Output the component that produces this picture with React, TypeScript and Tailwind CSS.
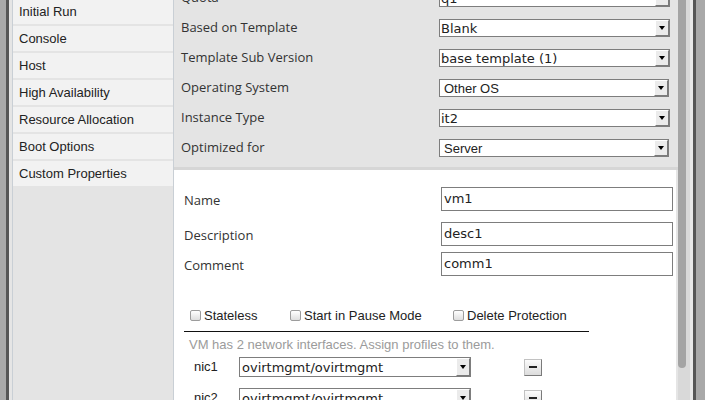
import React from 'react'

const SIDE_ITEMS = [
  'Initial Run',
  'Console',
  'Host',
  'High Availability',
  'Resource Allocation',
  'Boot Options',
  'Custom Properties',
]

const TOP_ROWS = [
  { label: 'Quota', value: 'q1', dejavu: true },
  { label: 'Based on Template', value: 'Blank', dejavu: true },
  { label: 'Template Sub Version', value: 'base template (1)', dejavu: true },
  { label: 'Operating System', value: 'Other OS', dejavu: false },
  { label: 'Instance Type', value: 'it2', dejavu: true },
  { label: 'Optimized for', value: 'Server', dejavu: false },
]

const TEXT_ROWS = [
  { label: 'Name', value: 'vm1', gap: 'mt-0' },
  { label: 'Description', value: 'desc1', gap: 'mt-[11px]' },
  { label: 'Comment', value: 'comm1', gap: 'mt-[6px]' },
]

const CHECKS = [
  { label: 'Stateless', width: 'w-[100px]' },
  { label: 'Start in Pause Mode', width: 'w-[163px]' },
  { label: 'Delete Protection', width: 'w-auto' },
]

function ArrowButton() {
  return (
    <span className="flex h-full w-[14px] shrink-0 items-center justify-center border-t border-l border-white border-r border-b border-r-[#7a7a7a] border-b-[#7a7a7a] bg-[#ebebeb]">
      <span className="h-0 w-0 border-x-[3px] border-t-[4px] border-x-transparent border-t-black" />
    </span>
  )
}

function Dropdown({ value, dejavu, width }: { value: string; dejavu: boolean; width: string }) {
  return (
    <div className={`flex h-[18px] items-stretch border border-[#7d7d7d] bg-white ${width}`}>
      <span
        className={`flex flex-1 items-center overflow-hidden whitespace-nowrap text-[13px] leading-none text-[#222] ${
          dejavu ? "pl-[1px] font-['DejaVu_Sans',sans-serif]" : "pl-[4px] font-['Liberation_Sans',sans-serif]"
        }`}
      >
        {value}
      </span>
      <ArrowButton />
    </div>
  )
}

function Checkbox({ label, width }: { label: string; width: string }) {
  return (
    <div className={`flex items-center gap-[3px] ${width}`}>
      <span className="h-[11px] w-[11px] rounded-[2px] border border-[#9c9c9c] bg-linear-to-b from-white to-[#dedede]" />
      <span className="pt-[1px] text-[13px] text-[#222]">{label}</span>
    </div>
  )
}

function MinusButton() {
  return (
    <span className="flex h-[17px] w-[18px] items-center justify-center border border-[#c2c2c2] border-r-[#7a7a7a] border-b-[#7a7a7a] bg-linear-to-b from-[#fbfbfb] to-[#dcdcdc]">
      <span className="h-[2px] w-[8px] bg-[#222]" />
    </span>
  )
}

export default function App() {
  return (
    <div className="flex h-[400px] w-[705px] overflow-hidden bg-[#a9a9a9] font-['Liberation_Sans',sans-serif]">
      <div className="w-[6px] shrink-0" />
      <div className="w-[3px] shrink-0 bg-[#565656]" />
      <div className="flex flex-1 bg-[#e5e5e5] pl-[3px]">
        {/* side tabs */}
        <div className="flex w-[162px] shrink-0 flex-col gap-[2px] border-l border-r border-[#c9cfd5] bg-[#e4e4e4]">
          {SIDE_ITEMS.map((item, i) => (
            <div
              key={item}
              className={`flex h-[25px] items-center bg-[#f2f2f2] pl-[6px] text-[13px] text-[#222] ${i === 0 ? 'mt-[-1px]' : ''}`}
            >
              {item}
            </div>
          ))}
        </div>

        {/* main panel */}
        <div className="flex w-[504px] shrink-0 flex-col">
          <div className="mt-[-17px] flex flex-col border-b-[3px] border-[#d6d6d6] bg-[#e4e4e4] pb-[4px] pl-[7px]">
            {TOP_ROWS.map((row) => (
              <div key={row.label} className="flex h-[30px] items-center">
                <span className="w-[258px] font-['Open_Sans',sans-serif] text-[13px] text-[#333]">{row.label}</span>
                <Dropdown value={row.value} dejavu={row.dejavu} width={row.dejavu ? 'w-[231px]' : 'w-[230px]'} />
              </div>
            ))}
          </div>

          <div className="mr-[2px] flex flex-1 flex-col bg-white pt-[17px]">
            <div className="flex flex-col pl-[10px]">
              {TEXT_ROWS.map((row) => (
                <div key={row.label} className={`flex h-[24px] items-center ${row.gap}`}>
                  <span className="w-[257px] pt-[3px] font-['Open_Sans',sans-serif] text-[13px] text-[#333]">{row.label}</span>
                  <div className="flex h-[24px] w-[232px] items-center border border-[#7d7d7d] pl-[2px] font-['DejaVu_Sans',sans-serif] text-[13px] text-[#222]">
                    {row.value}
                  </div>
                </div>
              ))}
            </div>

            <div className="mt-[32px] flex h-[14px] items-center pl-[16px]">
              {CHECKS.map((c) => (
                <Checkbox key={c.label} label={c.label} width={c.width} />
              ))}
            </div>

            <div className="mt-[9px] ml-[10px] h-[1px] w-[405px] bg-[#111]" />

            <div className="mt-[5px] pl-[15px] text-[13px] leading-[16px] text-[#9b9b9b]">
              VM has 2 network interfaces. Assign profiles to them.
            </div>

            {['nic1', 'nic2'].map((nic, i) => (
              <div key={nic} className={`flex h-[20px] items-center pl-[20px] ${i === 0 ? 'mt-[4px]' : 'mt-[11px]'}`}>
                <span className="w-[45px] text-[13px] text-[#222]">{nic}</span>
                <div className="flex h-[20px] w-[232px] items-stretch border border-[#7d7d7d] bg-white">
                  <span className="flex flex-1 items-center pl-[2px] font-['DejaVu_Sans',sans-serif] text-[13px] leading-none text-[#222]">
                    ovirtmgmt/ovirtmgmt
                  </span>
                  <ArrowButton />
                </div>
                <div className="ml-[53px]">
                  <MinusButton />
                </div>
              </div>
            ))}
          </div>
        </div>

        {/* scrollbar */}
        <div className="flex w-[12px] shrink-0 bg-[#d9d9d9]">
          <div className="h-[368px] w-[8px] rounded-b-[4px] bg-[#a4a4a4]" />
        </div>
        <div className="w-[3px] shrink-0 bg-[#e8e8e8]" />
      </div>
      <div className="w-[3px] shrink-0 bg-[#565656]" />
      <div className="w-[9px] shrink-0" />
    </div>
  )
}
